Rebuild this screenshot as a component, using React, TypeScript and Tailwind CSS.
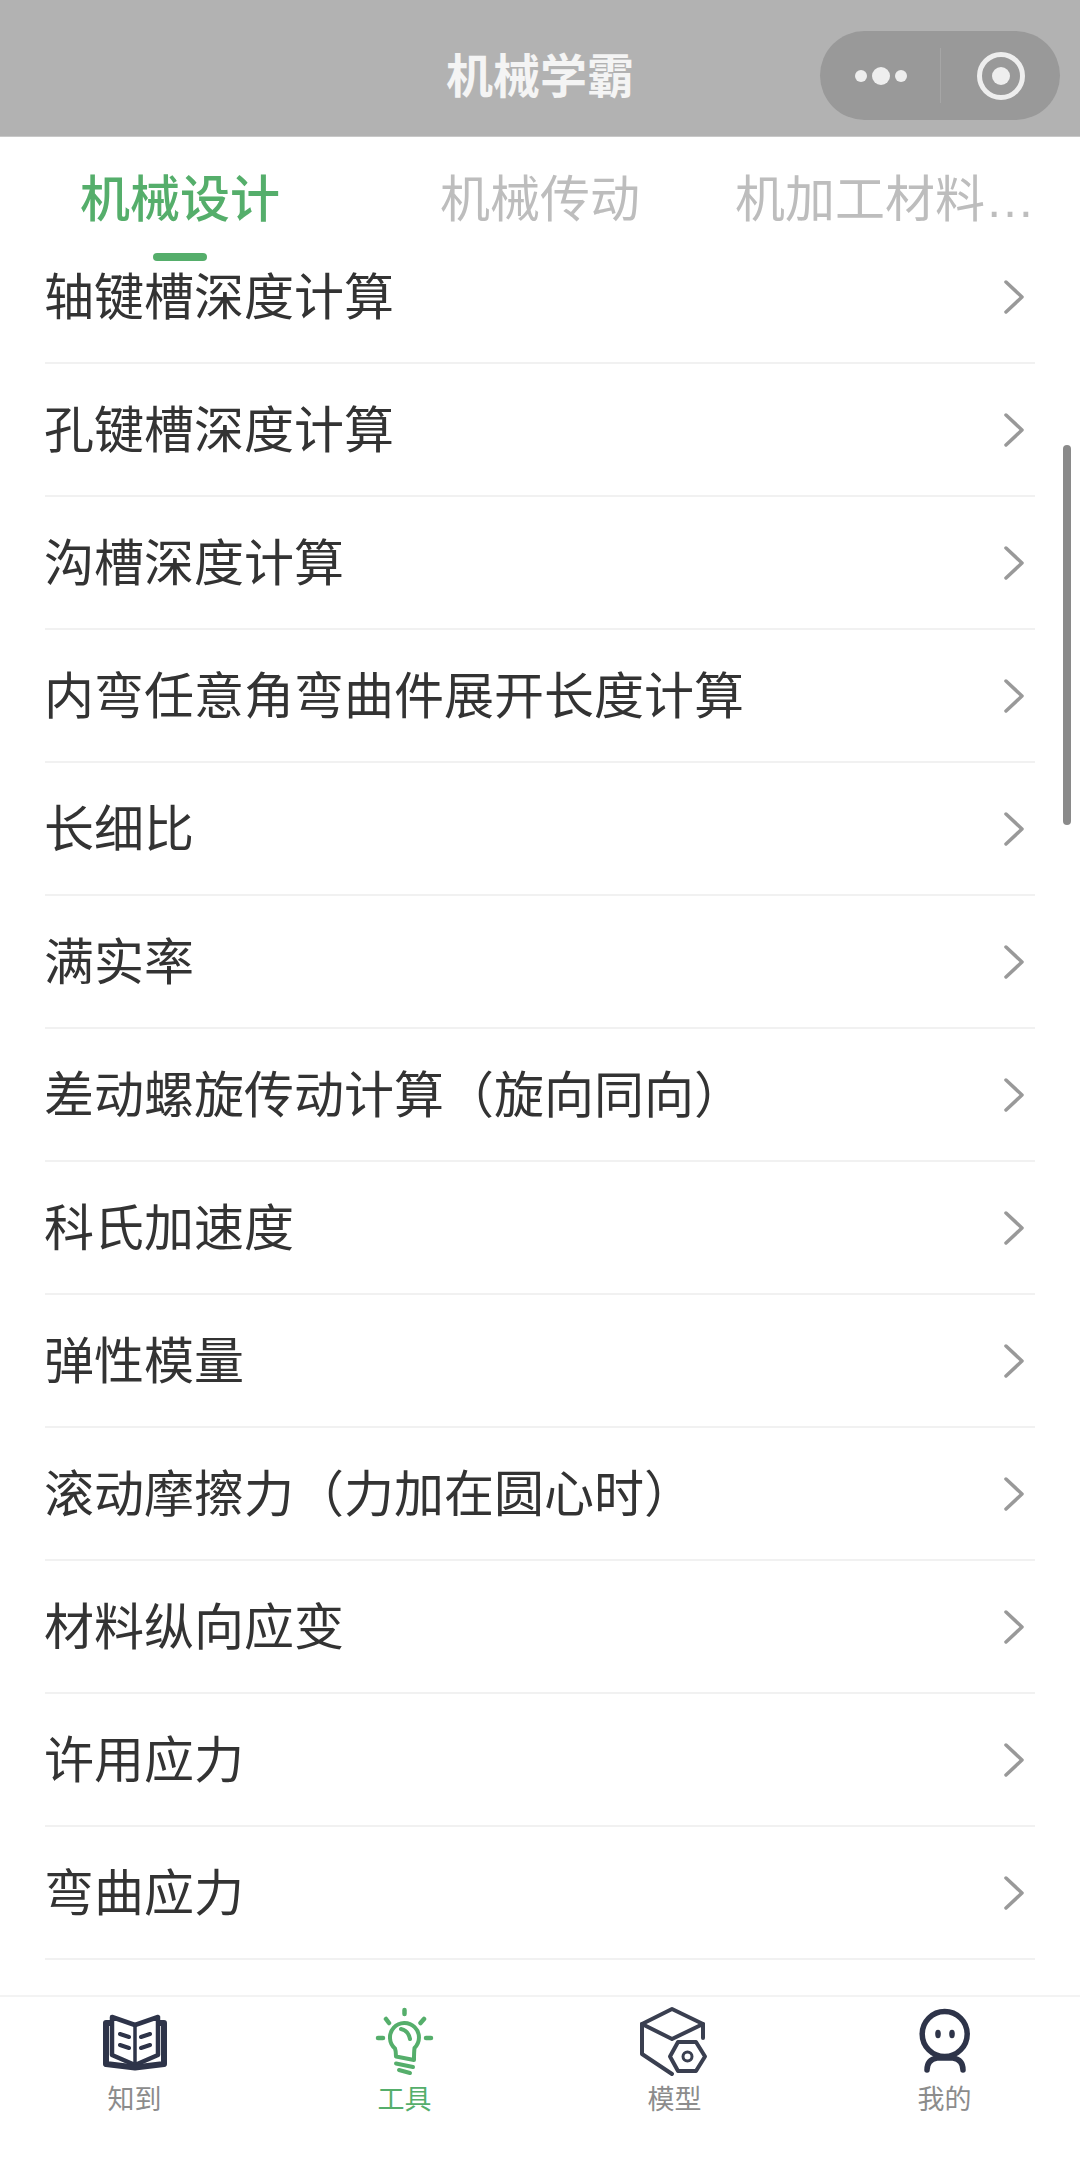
import React from "react";

const rows = [
  "轴键槽深度计算",
  "孔键槽深度计算",
  "沟槽深度计算",
  "内弯任意角弯曲件展开长度计算",
  "长细比",
  "满实率",
  "差动螺旋传动计算（旋向同向）",
  "科氏加速度",
  "弹性模量",
  "滚动摩擦力（力加在圆心时）",
  "材料纵向应变",
  "许用应力",
  "弯曲应力",
];

const BookIcon = () => (
  <svg viewBox="0 0 90 76" className="w-[90px] h-[76px]" fill="none" stroke="#2e3449" strokeWidth="4.5" strokeLinecap="round" strokeLinejoin="round">
    <path d="M22 17 L45 25 L68 17 V55 L45 65 L22 55 Z" />
    <path d="M45 25 V65" strokeWidth="3.5" />
    <path d="M20 23 H16 V64 L45 67.5 L74 64 V23 H70" strokeWidth="6" />
    <path d="M30 34 L39 37 M30 45 L39 48 M51 37 L60 34 M51 48 L60 45" strokeWidth="4" />
  </svg>
);

const BulbIcon = () => (
  <svg viewBox="0 0 90 76" className="w-[90px] h-[76px]" fill="none" stroke="#55ae6b" strokeWidth="4" strokeLinecap="round" strokeLinejoin="round">
    <path d="M44.5 10 V14 M26 19 L29 23 M64 19 L60.5 23 M18 38 H23 M66 38 H71" strokeWidth="4.5" />
    <path d="M36 56.5 C36 53 36 51 35 48.5 A14.5 14.5 0 1 1 54.5 48 C54 52 54 55 54 60 Z" />
    <path d="M41 29 C46 30 49 34 50 39" />
    <path d="M36 63.5 L53 67 M39 70 L50 73" strokeWidth="4" />
  </svg>
);

const ModelIcon = () => (
  <svg viewBox="0 0 90 76" className="w-[90px] h-[76px]" fill="none" stroke="#3a3f50" strokeWidth="4" strokeLinecap="round" strokeLinejoin="round">
    <path d="M12 24 L42 9 L73 24 L42 39 Z" />
    <path d="M73 24 V38 M12 24 V54 L42 74" />
    <path d="M40 56.5 L48 42 H66 L75 56.5 L66 71 H48 Z" />
    <circle cx="57.5" cy="56.5" r="4.5" strokeWidth="3" />
  </svg>
);

const UserIcon = () => (
  <svg viewBox="0 0 90 76" className="w-[90px] h-[76px]" fill="none" stroke="#2e3449" strokeWidth="5.5" strokeLinecap="round">
    <circle cx="44.7" cy="34" r="22.5" />
    <ellipse cx="38" cy="34" rx="2.8" ry="4.2" fill="#2e3449" stroke="none" />
    <ellipse cx="52" cy="34" rx="2.8" ry="4.2" fill="#2e3449" stroke="none" />
    <path d="M27 70 C27 63 31 59 37 58 M63 70 C63 63 59 59 53 58 M37 58 H53" />
  </svg>
);

const tabs = [
  { label: "知到", icon: <BookIcon />, active: false },
  { label: "工具", icon: <BulbIcon />, active: true },
  { label: "模型", icon: <ModelIcon />, active: false },
  { label: "我的", icon: <UserIcon />, active: false },
];

export default function App() {
  return (
    <div className="relative w-[1080px] h-[2157px] overflow-hidden bg-white flex flex-col font-['Noto_Sans_CJK_SC',sans-serif]">
      {/* top bar */}
      <div className="relative h-[137px] shrink-0 bg-[#b2b2b2] border-b border-[#c8c8c8] flex items-center justify-center">
        <span className="text-[47px] leading-none font-bold text-[#f4f4f4] mt-[9px]">机械学霸</span>
        <div className="absolute left-[820px] top-[31px] w-[240px] h-[89px] rounded-full bg-[#999999] flex items-center">
          <div className="w-[120px] flex items-center pl-[35px] gap-[5px]">
            <span className="w-[12px] h-[12px] rounded-full bg-[#eeeeee]" />
            <span className="w-[18px] h-[18px] rounded-full bg-[#eeeeee]" />
            <span className="w-[12px] h-[12px] rounded-full bg-[#eeeeee]" />
          </div>
          <div className="w-[1px] h-[55px] bg-[#a6a6a6]" />
          <div className="flex-1 flex items-center justify-center">
            <div className="w-[48px] h-[48px] rounded-full border-[5px] border-[#eeeeee] flex items-center justify-center">
              <div className="w-[18px] h-[18px] rounded-full bg-[#eeeeee]" />
            </div>
          </div>
        </div>
      </div>

      {/* category tabs */}
      <div className="relative z-10 h-[124px] shrink-0 bg-white flex items-start">
        <div className="w-[360px] flex flex-col items-center">
          <span className="mt-[23px] text-[50px] leading-[70px] font-medium text-[#55ae6b]">机械设计</span>
          <span className="mt-[23px] w-[54px] h-[8px] rounded-full bg-[#55ae6b]" />
        </div>
        <div className="w-[360px] flex flex-col items-center">
          <span className="mt-[23px] text-[50px] leading-[70px] text-[#bdbdbd]">机械传动</span>
        </div>
        <div className="w-[360px]">
          <span className="block mt-[23px] ml-[15px] text-[50px] leading-[70px] text-[#bdbdbd] whitespace-nowrap">
            机加工材料<span className="font-['Liberation_Sans',sans-serif]">…</span>
          </span>
        </div>
      </div>

      {/* list */}
      <div className="flex-1 overflow-hidden">
        <div className="-mt-[30px] mx-[45px] flex flex-col">
          {rows.map((r) => (
            <div key={r} className="h-[133px] border-b-[2px] border-[#f1f1f1] flex items-center justify-between">
              <span className="text-[50px] leading-none text-[#333333] whitespace-nowrap -ml-[1px] -translate-y-[4px]">{r}</span>
              <svg viewBox="0 0 20 34" className="w-[20px] h-[34px] mr-[11px]" fill="none" stroke="#999999" strokeWidth="3.5" strokeLinecap="round" strokeLinejoin="round">
                <path d="M2 2 L18 17 L2 32" />
              </svg>
            </div>
          ))}
        </div>
      </div>

      {/* bottom tab bar */}
      <div className="h-[162px] shrink-0 bg-white border-t-[2px] border-[#f3f3f3] grid grid-cols-4 pt-[3px]">
        {tabs.map((t) => (
          <div key={t.label} className="flex flex-col items-center">
            {t.icon}
            <span className={`mt-[4px] -ml-[1px] text-[27px] leading-[36px] ${t.active ? "text-[#55ae6b]" : "text-[#8c8c8c]"}`}>{t.label}</span>
          </div>
        ))}
      </div>

      {/* scrollbar */}
      <div className="absolute left-[1063px] top-[445px] w-[8px] h-[380px] rounded-full bg-[#8a8a8a]" />
    </div>
  );
}
